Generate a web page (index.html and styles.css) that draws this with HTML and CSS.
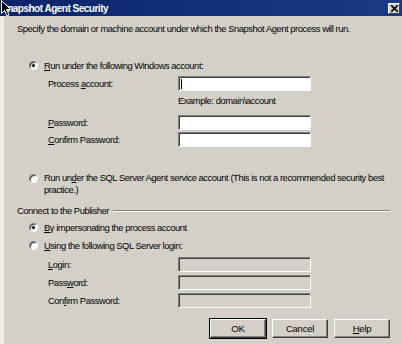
FILE: index.html
```html
<!DOCTYPE html>
<html lang="en">
<head>
  <meta charset="UTF-8">
  <title>Snapshot Agent Security</title>
  <link rel="stylesheet" href="styles.css">
</head>
<body>
  <div class="window">
    <div class="titlebar">
      <span class="title">Snapshot Agent Security</span>
      <span class="close">
        <svg width="7" height="7" viewBox="0 0 7 7"><path d="M0 0L7 7M7 0L0 7" stroke="#000" stroke-width="1.6"/></svg>
      </span>
    </div>

    <div class="dialog">
      <p class="intro">Specify the domain or machine account under which the Snapshot Agent process will run.</p>

      <label class="option first-option">
        <span class="radio checked"></span>
        <span><u>R</u>un under the following Windows account:</span>
      </label>

      <div class="fields account-fields">
        <span class="field-label">Process <u>a</u>ccount:</span>
        <span class="input"><span class="caret"></span></span>
        <span></span>
        <span class="hint">Example: domain\account</span>
        <span class="field-label pwd-label"><u>P</u>assword:</span>
        <span class="input pwd-input"></span>
        <span class="field-label"><u>C</u>onfirm Password:</span>
        <span class="input"></span>
      </div>

      <label class="option agent-option">
        <span class="radio"></span>
        <span class="option-text">Run un<u>d</u>er the SQL Server Agent service account (This is not a recommended security best practice.)</span>
      </label>

      <div class="group-title">
        <span>Connect to the Publisher</span>
        <span class="rule"></span>
      </div>

      <label class="option impersonate-option">
        <span class="radio checked"></span>
        <span><u>B</u>y impersonating the process account</span>
      </label>

      <label class="option login-option">
        <span class="radio"></span>
        <span><u>U</u>sing the following SQL Server login:</span>
      </label>

      <div class="fields login-fields">
        <span class="field-label"><u>L</u>ogin:</span>
        <span class="input disabled"></span>
        <span class="field-label">Pass<u>w</u>ord:</span>
        <span class="input disabled"></span>
        <span class="field-label">Con<u>f</u>irm Password:</span>
        <span class="input disabled"></span>
      </div>

      <div class="buttons">
        <button class="btn btn-default">OK</button>
        <button class="btn">Cancel</button>
        <button class="btn"><u>H</u>elp</button>
      </div>
    </div>

    <svg class="cursor" width="11" height="17" viewBox="0 0 11 17">
      <path d="M0.5 0.5L0.5 13.5L3.5 10.5L6 16L8 15L5.5 9.5L9.5 9.5Z" fill="#000" stroke="#fff" stroke-width="1"/>
    </svg>
  </div>
</body>
</html>
```

FILE: styles.css
```css
body {
  margin: 0;
  background-color: #d4d0c8;
  font-family: 'Liberation Sans', Arial, sans-serif;
  font-size: 9.4px;
  letter-spacing: -0.45px;
  color: #000;
}
.window {
  position: relative;
  width: 402px;
  height: 344px;
  overflow: hidden;
  background-color: #d4d0c8;
}
.titlebar {
  height: 16px;
  display: flex;
  align-items: center;
  justify-content: space-between;
  padding: 0 2px 0 1px;
  background: linear-gradient(to right, #0a246a, #1a3a86);
  color: white;
}
.title {
  font-weight: bold;
  font-size: 10px;
  letter-spacing: -0.5px;
}
.close {
  width: 10px;
  height: 9px;
  display: flex;
  align-items: center;
  justify-content: center;
  background-color: #d4d0c8;
  border: 1px solid;
  border-color: #fff #404040 #404040 #fff;
  margin-top: 1px;
}
.dialog {
  height: 328px;
  box-sizing: border-box;
  border-left: 4px solid #ecebe8;
  padding-left: 13px;
  display: flex;
  flex-direction: column;
  line-height: 13px;
}
.intro {
  margin: 6px 0 0 0;
}
.option {
  display: flex;
  align-items: flex-start;
  gap: 6px;
  margin-left: 12px;
}
.first-option {
  margin-top: 24px;
}
.agent-option {
  margin-top: 25px;
  line-height: 12px;
}
.option-text {
  max-width: 345px;
}
.impersonate-option {
  margin-top: 4px;
}
.login-option {
  margin-top: 5px;
}
.radio {
  flex: none;
  width: 7px;
  height: 7px;
  margin-top: 2px;
  border-radius: 50%;
  background-color: #fff;
  border: 1px solid;
  border-color: #808080 #fff #fff #808080;
  box-shadow: inset 1px 1px 0 #404040;
  display: flex;
  align-items: center;
  justify-content: center;
}
.radio.checked::after {
  content: '';
  width: 3px;
  height: 3px;
  border-radius: 50%;
  background-color: #000;
}
.fields {
  display: grid;
  grid-template-columns: 130px 133px;
  align-items: center;
  margin-left: 31px;
}
.account-fields {
  margin-top: 4px;
  row-gap: 2px;
}
.hint {
  margin-top: 1px;
  margin-bottom: 4px;
}
.pwd-input, .pwd-label {
  margin-top: 2px;
}
.login-fields {
  margin-top: 5px;
  row-gap: 3px;
}
.input {
  height: 15px;
  box-sizing: border-box;
  background-color: #fff;
  border: 1px solid;
  border-color: #808080 #fff #fff #808080;
  box-shadow: inset 1px 1px 0 #404040;
  display: flex;
  align-items: center;
  padding-left: 2px;
}
.input.disabled {
  background-color: #d4d0c8;
}
.caret {
  width: 1px;
  height: 10px;
  background-color: #000;
}
.group-title {
  display: flex;
  align-items: center;
  gap: 4px;
  margin-top: 8px;
  padding-right: 12px;
}
.rule {
  flex: 1;
  height: 0;
  border-top: 1px solid #808080;
  border-bottom: 1px solid #fff;
}
.buttons {
  display: flex;
  justify-content: flex-end;
  gap: 6px;
  margin-top: 11px;
  padding-right: 12px;
}
.btn {
  width: 56px;
  height: 19px;
  padding: 0;
  font-family: inherit;
  font-size: 9.6px;
  letter-spacing: -0.3px;
  color: #000;
  background-color: #d4d0c8;
  border: 1px solid;
  border-color: #fff #404040 #404040 #fff;
  box-shadow: inset -1px -1px 0 #808080;
}
.btn-default {
  outline: 1px solid #000;
  outline-offset: 0;
}
.cursor {
  position: absolute;
  left: 1px;
  top: 0;
}
```
